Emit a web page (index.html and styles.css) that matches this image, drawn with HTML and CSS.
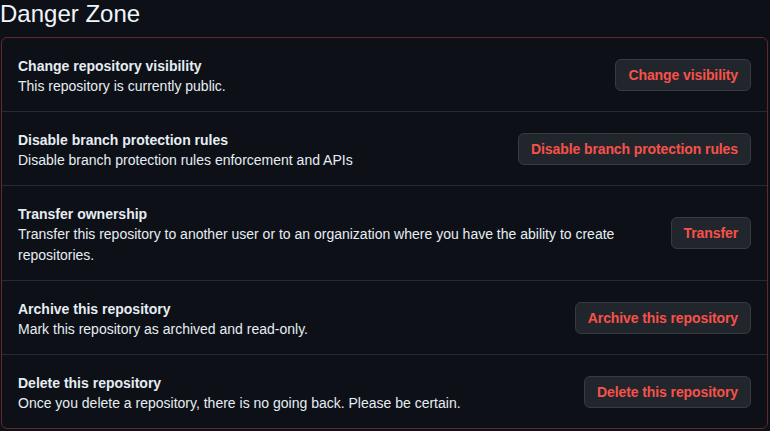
FILE: index.html
```html
<!DOCTYPE html>
<html lang="en">
<head>
<meta charset="utf-8">
<link rel="stylesheet" href="styles.css">
</head>
<body>
<div class="page">
  <h2 class="heading">Danger Zone</h2>
  <div class="box">
    <div class="row">
      <div class="info">
        <div class="title">Change repository visibility</div>
        <div class="desc">This repository is currently public.</div>
      </div>
      <button class="btn">Change visibility</button>
    </div>
    <div class="row">
      <div class="info">
        <div class="title">Disable branch protection rules</div>
        <div class="desc">Disable branch protection rules enforcement and APIs</div>
      </div>
      <button class="btn">Disable branch protection rules</button>
    </div>
    <div class="row">
      <div class="info">
        <div class="title">Transfer ownership</div>
        <div class="desc">Transfer this repository to another user or to an organization where you have the ability to create repositories.</div>
      </div>
      <button class="btn">Transfer</button>
    </div>
    <div class="row">
      <div class="info">
        <div class="title">Archive this repository</div>
        <div class="desc">Mark this repository as archived and read-only.</div>
      </div>
      <button class="btn">Archive this repository</button>
    </div>
    <div class="row">
      <div class="info">
        <div class="title">Delete this repository</div>
        <div class="desc">Once you delete a repository, there is no going back. Please be certain.</div>
      </div>
      <button class="btn">Delete this repository</button>
    </div>
  </div>
</div>
</body>
</html>
```
FILE: styles.css
```css
html, body {
  margin: 0;
  background: #0d1117;
  color: #e6edf3;
  font-family: "Liberation Sans", Arial, sans-serif;
  font-size: 14px;
}
.page {
  padding: 0 2px 0 1px;
}
.heading {
  margin: 0 0 10px -1px;
  font-size: 24px;
  font-weight: 400;
  line-height: 27px;
  color: #f0f6fc;
}
.box {
  border: 1px solid #5d2a2f;
  border-radius: 6px;
}
.row {
  display: flex;
  align-items: center;
  gap: 16px;
  padding: 16px;
  border-top: 1px solid #262b32;
}
.row:first-child {
  border-top: none;
}
.info {
  flex: 1;
  margin: 2px 0 -2px;
}
.title {
  font-weight: 700;
  line-height: 20px;
}
.desc {
  line-height: 21px;
}
.btn {
  flex: none;
  height: 32px;
  padding: 0 12px;
  background: #21262d;
  border: 1px solid #363b42;
  border-radius: 6px;
  color: #f85149;
  font-family: inherit;
  font-size: 14px;
  font-weight: 700;
  letter-spacing: -0.1px;
}
```
